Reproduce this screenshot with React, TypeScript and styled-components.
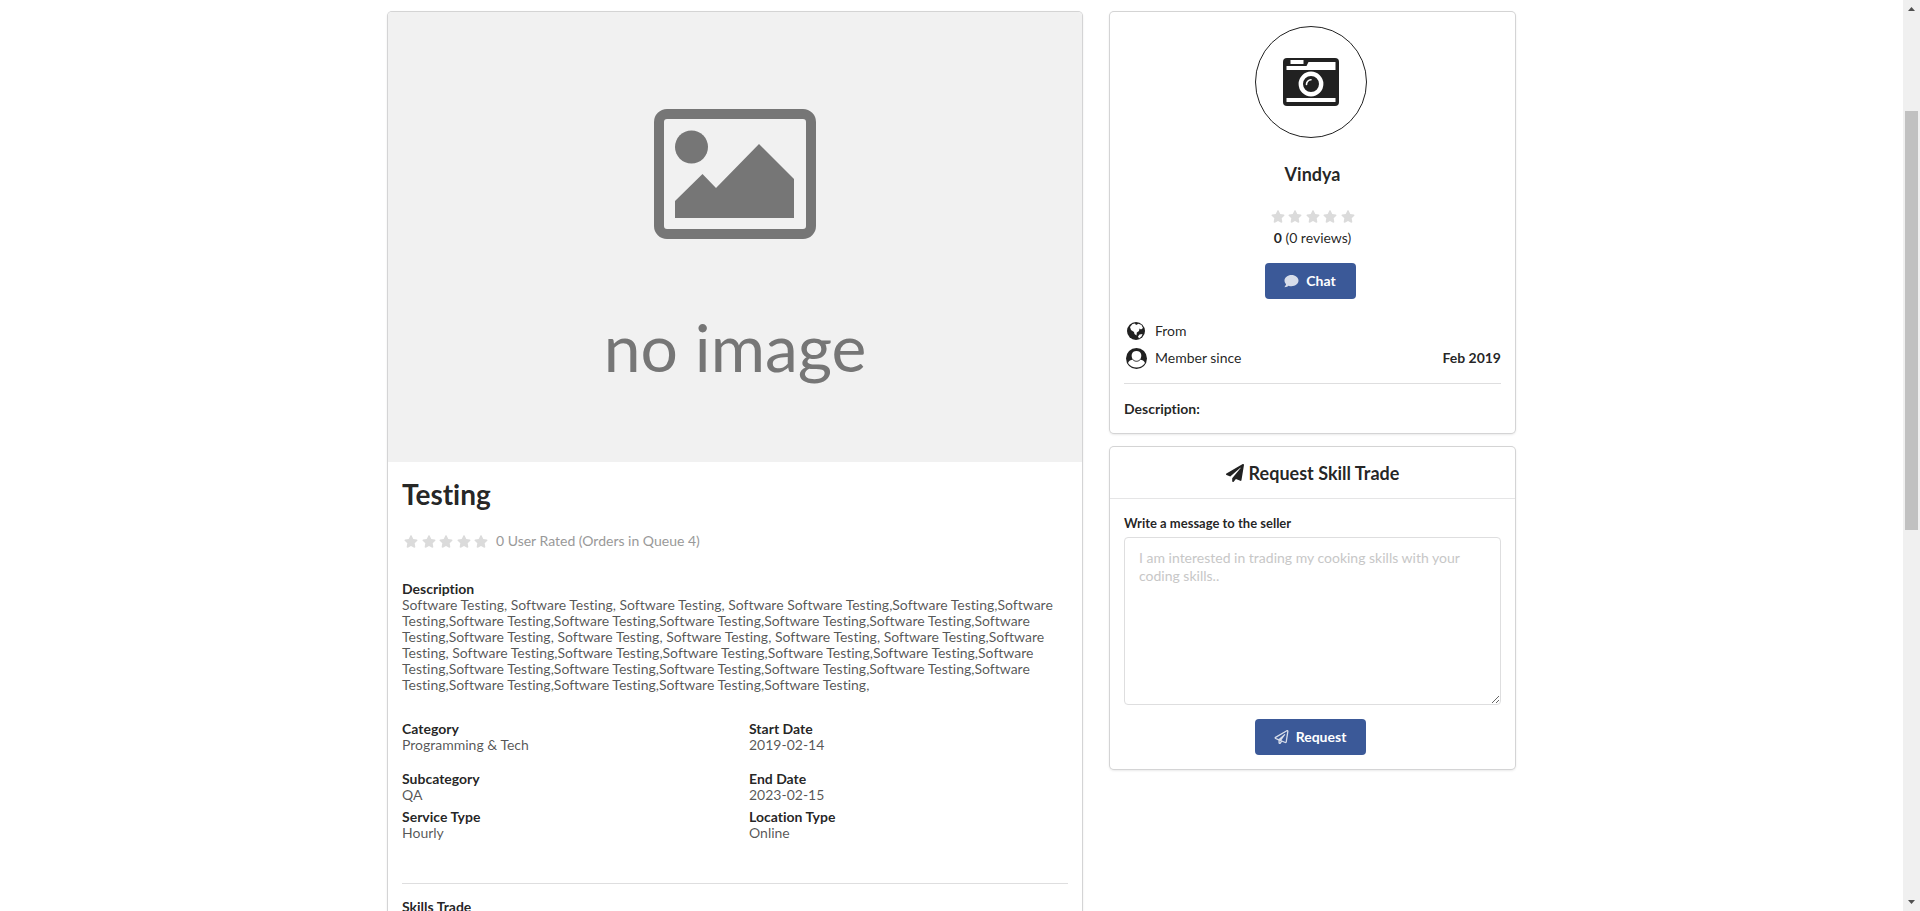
import React from "react";
import styled, { createGlobalStyle } from "styled-components";
import { FaStar, FaComment, FaPaperPlane, FaRegPaperPlane } from "react-icons/fa";

const GlobalStyle = createGlobalStyle`
  *, *::before, *::after { box-sizing: border-box; }
  body {
    margin: 0;
    background: #fff;
    color: rgba(0, 0, 0, 0.87);
    font-family: Lato, "Liberation Sans", sans-serif;
    font-size: 14px;
    font-variant-ligatures: none;
    line-height: 20px;
  }
  h1, h2, h3, p, dl, dd { margin: 0; }
`;

const Viewport = styled.div`
  display: flex;
  height: 100vh;
  overflow: hidden;
`;

const Page = styled.main`
  flex: 1;
  min-width: 0;
  padding: 12px 20px 0;
`;

const Columns = styled.div`
  display: grid;
  grid-template-columns: minmax(0, 694fr) minmax(0, 405fr);
  align-items: start;
  gap: 28px;
  max-width: 1127px;
  margin: 0 auto;
`;

const Sidebar = styled.div`
  display: flex;
  flex-direction: column;
  gap: 14px;
`;

const Card = styled.section`
  border-radius: 4px;
  background: #fff;
  box-shadow: 0 1px 3px 0 #d4d4d5, 0 0 0 1px #d4d4d5;
`;

const Section = styled.div`
  padding: 14px;
`;

const Placeholder = styled.div`
  display: flex;
  flex-direction: column;
  align-items: center;
  height: 450px;
  padding-top: 97px;
  border-radius: 4px 4px 0 0;
  background: #f1f1f1;
  color: #767676;
`;

const PlaceholderText = styled.span`
  margin-top: 68px;
  font-size: 66px;
  line-height: 80px;
`;

const Title = styled.h1`
  font-size: 28px;
  line-height: 36px;
`;

const Stars = styled.span`
  display: flex;
  justify-content: space-between;
  width: 84px;
  color: #dbdbdb;
  svg { width: 14px; height: 13px; }
`;

const Rating = styled.div`
  display: flex;
  align-items: center;
  gap: 8px;
  margin: 19px 0 30px;
  padding-left: 2px;
  color: #999;
`;

const Details = styled.dl`
  display: grid;
  grid-template-columns: calc(50% + 14px) 1fr;
  line-height: 16px;
`;

const Detail = styled.div<{ $wide?: boolean; $after: number }>`
  grid-column: ${(p) => (p.$wide ? "1 / -1" : "auto")};
  margin-bottom: ${(p) => p.$after}px;
  dt { font-weight: 700; }
  dd { color: rgba(0, 0, 0, 0.68); }
`;

const Divider = styled.hr`
  margin: 0 0 15px;
  border: 0;
  border-top: 1px solid #dededf;
`;

const Profile = styled.div`
  display: flex;
  flex-direction: column;
  align-items: center;
`;

const Avatar = styled.span`
  display: flex;
  align-items: center;
  justify-content: center;
  width: 112px;
  height: 112px;
  margin-right: 4px;
  border: 1px solid #212121;
  border-radius: 50%;
  color: #212121;
`;

const Name = styled.h2`
  margin: 24px 0;
  font-size: 18px;
  line-height: 24px;
`;

const Reviews = styled.p`
  margin: 5px 0 15px;
`;

const Button = styled.button`
  display: inline-flex;
  align-items: center;
  gap: 7px;
  height: 36px;
  margin-right: 4px;
  padding: 0 20px 0 19px;
  border: 0;
  border-radius: 4px;
  background: #3b5998;
  color: #fff;
  font: 700 14px/14px Lato, sans-serif;
  svg { width: 15px; height: 14px; opacity: 0.8; }
`;

const Facts = styled.dl`
  display: flex;
  flex-direction: column;
  gap: 3px;
  margin: 20px 0 13px;
`;

const Fact = styled.div`
  display: grid;
  grid-template-columns: 24px 1fr auto;
  align-items: center;
  gap: 7px;
  height: 24px;
  svg { justify-self: center; }
  dd { font-weight: 700; }
`;

const RequestTitle = styled.h2`
  display: flex;
  align-items: center;
  justify-content: center;
  gap: 5px;
  height: 52px;
  border-bottom: 1px solid #e5e5e6;
  font-size: 18px;
  line-height: 24px;
`;

const Form = styled.form`
  display: flex;
  flex-direction: column;
  align-items: center;
  padding: 14px;
`;

const Label = styled.label`
  align-self: stretch;
  margin-bottom: 4px;
  font-size: 13px;
  font-weight: 700;
`;

const Message = styled.textarea`
  width: 100%;
  height: 168px;
  margin-bottom: 14px;
  padding: 11px 14px;
  border: 1px solid #dededf;
  border-radius: 4px;
  background: #fff;
  font: 14px/18px Lato, sans-serif;
  resize: vertical;
  &::placeholder { color: #c7c7c7; }
`;

const ScrollTrack = styled.div`
  display: flex;
  flex-direction: column;
  align-items: center;
  width: 17px;
  padding: 7px 0;
  background: #f0f0f0;
`;

const ScrollSpace = styled.span<{ $grow: number }>`
  flex: ${(p) => p.$grow} 0 0;
`;

const ScrollThumb = styled.span`
  flex: 419 0 0;
  width: 13px;
  background: #c1c1c1;
`;

const FiveStars = () => (
  <Stars role="img" aria-label="0 of 5 stars">
    {[1, 2, 3, 4, 5].map((n) => <FaStar key={n} />)}
  </Stars>
);

const PictureIcon = () => (
  <svg width="162" height="130" viewBox="0 0 162 130" aria-hidden="true">
    <rect x="5" y="5" width="152" height="120" rx="8" fill="none" stroke="currentColor" strokeWidth="10" />
    <circle cx="37.500" cy="38" r="16.500" fill="currentColor" />
    <path d="M21 92 48.500 65 62 79 105 35 140 70V109H21Z" fill="currentColor" />
  </svg>
);

const CameraIcon = () => (
  <svg width="56" height="48" viewBox="0 0 56 48" aria-hidden="true">
    <rect width="56" height="48" rx="4" fill="currentColor" />
    <path d="M7.500 2h13v4h-13ZM3.500 8H23.500L25.500 4H52.500V12H3.500ZM3.500 40h49v4h-49Z" fill="#fff" />
    <circle cx="28" cy="26" r="10.200" fill="none" stroke="#fff" strokeWidth="4.400" />
    <path d="M23.500 26.500A4.500 4.500 0 0 1 28 21.800" fill="none" stroke="#fff" strokeWidth="1.600" strokeLinecap="round" />
  </svg>
);

const GlobeIcon = () => (
  <svg width="18" height="18" viewBox="0 0 18 18" aria-hidden="true">
    <circle cx="9" cy="9" r="9" fill="#212121" />
    <path d="M3 5 5.500 2 8 1.500 9 3 11.500 1.800 14.500 3 16 6 14 7.500 12.500 6.500 12 9 9.800 10.500 9.500 13.500 7.500 12 7 10 4 8ZM12.500 12.500 15.500 12 14.500 14.500 12 16.500 11 14.500Z" fill="#fff" />
  </svg>
);

const MemberIcon = () => (
  <svg width="21" height="21" viewBox="0 0 21 21" aria-hidden="true">
    <circle cx="10.500" cy="10.500" r="10.500" fill="#212121" />
    <path d="M2 15C3 12.500 4.500 12 7 11.700 4.500 8 5.500 3 10.500 3s6 5 3.500 8.700c2.500.3 4 .8 5 3.300-4 6-13 6-17 0Z" fill="#fff" />
    <path d="M7 11.700c2 2.100 5 2.100 7 0" fill="none" stroke="#212121" strokeWidth="1" />
  </svg>
);

const description =
  "Software Testing, Software Testing, Software Testing, Software Software Testing,Software Testing,Software Testing,Software Testing,Software Testing,Software Testing,Software Testing,Software Testing,Software Testing,Software Testing, Software Testing, Software Testing, Software Testing, Software Testing,Software Testing, Software Testing,Software Testing,Software Testing,Software Testing,Software Testing,Software Testing,Software Testing,Software Testing,Software Testing,Software Testing,Software Testing,Software Testing,Software Testing,Software Testing,Software Testing,Software Testing,";

const details: { label: string; value: string; after: number; wide?: boolean }[] = [
  { label: "Description", value: description, after: 28, wide: true },
  { label: "Category", value: "Programming & Tech", after: 18 },
  { label: "Start Date", value: "2019-02-14", after: 18 },
  { label: "Subcategory", value: "QA", after: 6 },
  { label: "End Date", value: "2023-02-15", after: 6 },
  { label: "Service Type", value: "Hourly", after: 42 },
  { label: "Location Type", value: "Online", after: 42 },
];

export default function App() {
  return (
    <Viewport>
      <GlobalStyle />
      <Page>
        <Columns>
          <Card>
            <Placeholder>
              <PictureIcon />
              <PlaceholderText>no image</PlaceholderText>
            </Placeholder>
            <Section>
              <Title>Testing</Title>
              <Rating><FiveStars />0 User Rated (Orders in Queue 4)</Rating>
              <Details>
                {details.map((d) => (
                  <Detail key={d.label} $wide={d.wide} $after={d.after}>
                    <dt>{d.label}</dt>
                    <dd>{d.value}</dd>
                  </Detail>
                ))}
              </Details>
              <Divider />
              <Details>
                <Detail $wide $after={14}><dt>Skills Trade</dt></Detail>
              </Details>
            </Section>
          </Card>
          <Sidebar>
            <Card>
              <Section>
                <Profile>
                  <Avatar><CameraIcon /></Avatar>
                  <Name>Vindya</Name>
                  <FiveStars />
                  <Reviews><b>0</b> (0 reviews)</Reviews>
                  <Button type="button"><FaComment />Chat</Button>
                </Profile>
                <Facts>
                  <Fact><GlobeIcon /><dt>From</dt></Fact>
                  <Fact><MemberIcon /><dt>Member since</dt><dd>Feb 2019</dd></Fact>
                </Facts>
                <Divider />
                <b>Description:</b>
              </Section>
            </Card>
            <Card>
              <RequestTitle><FaPaperPlane />Request Skill Trade</RequestTitle>
              <Form onSubmit={(e) => e.preventDefault()}>
                <Label htmlFor="message">Write a message to the seller</Label>
                <Message id="message" placeholder="I am interested in trading my cooking skills with your coding skills.." />
                <Button type="submit"><FaRegPaperPlane />Request</Button>
              </Form>
            </Card>
          </Sidebar>
        </Columns>
      </Page>
      <ScrollTrack aria-hidden="true">
        <svg width="7" height="4"><path d="M0 4 3.500 0 7 4Z" fill="#505050" /></svg>
        <ScrollSpace $grow={100} />
        <ScrollThumb />
        <ScrollSpace $grow={370} />
        <svg width="7" height="4"><path d="M0 0 3.500 4 7 0Z" fill="#505050" /></svg>
      </ScrollTrack>
    </Viewport>
  );
}
